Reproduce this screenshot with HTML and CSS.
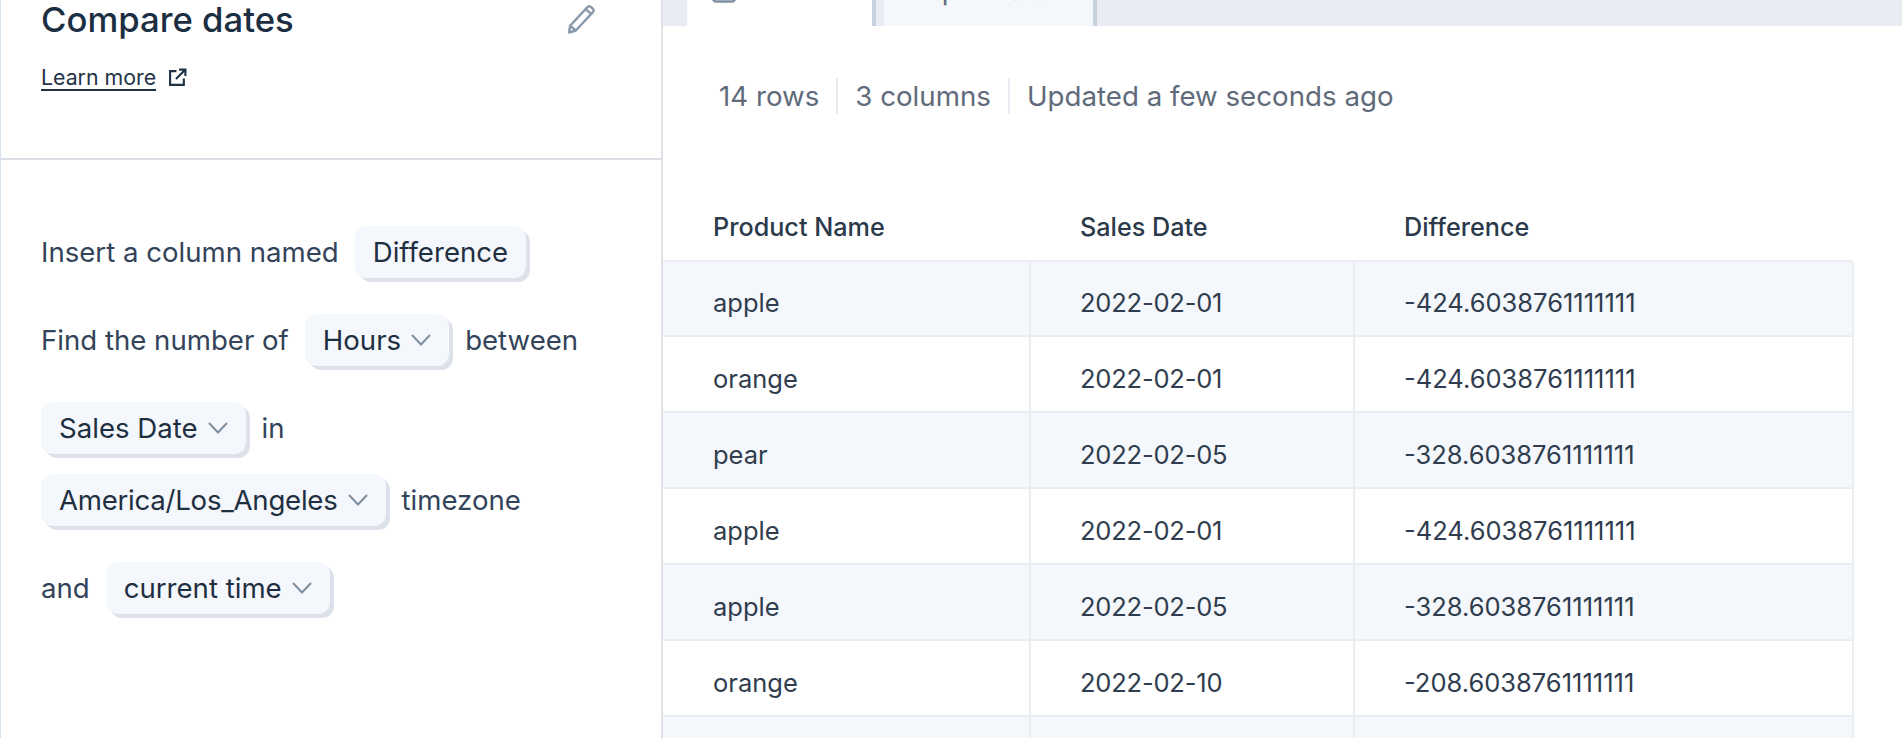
FILE: index.html
```html
<!DOCTYPE html>
<html lang="en">
<head>
<meta charset="utf-8">
<title>Compare dates</title>
<link rel="stylesheet" href="styles.css">
</head>
<body>
<div class="app">
  <aside class="panel">
    <header class="panel-head">
      <div class="title-row">
        <h1 class="title">Compare dates</h1>
        <svg class="pencil" width="29" height="30" viewBox="0 0 28 29" fill="none" stroke="#8a9bab" stroke-width="2.4" stroke-linejoin="round"><path d="M2 27.5l1-6.5L19.5 3.2a2.6 2.6 0 0 1 3.6-.3l1.6 1.3a2.6 2.6 0 0 1 .3 3.6L8.5 25.6z"/><path d="M3 21l5.5 4.6M18 5l6 5"/></svg>
      </div>
      <a class="learn" href="#">
        <span class="learn-text">Learn more</span>
        <svg width="19" height="19" viewBox="0 0 18 18" fill="none" stroke="#1f3346" stroke-width="2"><path d="M8 3H2v13h13v-6"/><path d="M7.5 10.5L16.5 1.500M10.500 1.500h6v6"/></svg>
      </a>
    </header>
    <section class="form">
      <div class="line"><span>Insert a column named</span><span class="chip">Difference</span></div>
      <div class="line"><span>Find the number of</span><span class="chip">Hours<svg class="chev" width="20" height="12" viewBox="0 0 20 12" fill="none" stroke="#7e90a0" stroke-width="2"><path d="M1 1l9 9.500L19 1"/></svg></span><span>between</span></div>
      <div class="line"><span class="chip">Sales Date<svg class="chev" width="20" height="12" viewBox="0 0 20 12" fill="none" stroke="#7e90a0" stroke-width="2"><path d="M1 1l9 9.500L19 1"/></svg></span><span>in</span><span class="chip chip-tight">America/Los_Angeles<svg class="chev" width="20" height="12" viewBox="0 0 20 12" fill="none" stroke="#7e90a0" stroke-width="2"><path d="M1 1l9 9.500L19 1"/></svg></span><span>timezone</span></div>
      <div class="line"><span>and</span><span class="chip">current time<svg class="chev" width="20" height="12" viewBox="0 0 20 12" fill="none" stroke="#7e90a0" stroke-width="2"><path d="M1 1l9 9.500L19 1"/></svg></span></div>
    </section>
  </aside>
  <main class="main">
    <nav class="tabs">
      <div class="tab tab-active"><svg class="tab-icon" width="26" height="26" viewBox="0 0 26 26" fill="none" stroke="#7e90a0" stroke-width="2.400"><rect x="1.500" y="1.500" width="23" height="23" rx="4"/></svg><span>Results</span></div>
      <div class="tab tab-other"><span>Input data</span></div>
    </nav>
    <div class="meta">
      <span class="meta-item">14 rows</span>
      <span class="meta-item">3 columns</span>
      <span class="meta-item">Updated a few seconds ago</span>
    </div>
    <table class="grid">
      <colgroup><col class="c1"><col class="c2"><col class="c3"></colgroup>
      <thead><tr><th>Product Name</th><th>Sales Date</th><th>Difference</th></tr></thead>
      <tbody>
        <tr><td>apple</td><td class="date">2022-02-01</td><td>-424.6038761111111</td></tr>
        <tr><td>orange</td><td class="date">2022-02-01</td><td>-424.6038761111111</td></tr>
        <tr><td>pear</td><td class="date">2022-02-05</td><td>-328.6038761111111</td></tr>
        <tr><td>apple</td><td class="date">2022-02-01</td><td>-424.6038761111111</td></tr>
        <tr><td>apple</td><td class="date">2022-02-05</td><td>-328.6038761111111</td></tr>
        <tr><td>orange</td><td class="date">2022-02-10</td><td>-208.6038761111111</td></tr>
        <tr><td></td><td></td><td></td></tr>
      </tbody>
    </table>
  </main>
</div>
</body>
</html>
```
FILE: styles.css
```css
* { box-sizing: border-box; }
html, body { margin: 0; height: 100%; overflow: hidden; background: #fff; }
body { font-family: Inter, "Noto Sans", sans-serif; color: #2b3a4b; }
.app { display: flex; height: 738px; overflow: hidden; }

.panel { width: 663px; flex: none; border-left: 1px solid #d7e2ef; border-right: 2px solid #dfe3e8; }
.panel-head { height: 160px; border-bottom: 2px solid #dadfe5; padding: 0 40px; }
.title-row { display: flex; justify-content: space-between; align-items: flex-start; height: 38px; padding-right: 25px; }
.title { margin: 0; font-size: 34.700px; line-height: 38px; font-weight: 500; color: #1c2e42; }
.pencil { margin-top: 4px; flex: none; }
.learn { display: inline-flex; align-items: center; gap: 12px; margin-top: 25px; color: #1f3346; text-decoration: none; font-size: 21.300px; line-height: 28px; }
.learn-text { text-decoration: underline; text-underline-offset: 4px; text-decoration-thickness: 2px; }

.form { padding: 66px 40px 0; }
.line { display: flex; flex-wrap: wrap; align-items: center; gap: 20px 16px; margin-bottom: 36px; font-size: 27.600px; font-weight: 400; line-height: 50px; color: #33445a; }
.line > span { padding-bottom: 1px; }
.chip { display: inline-flex; align-items: center; gap: 10px; height: 52px; padding: 0 18px; border-radius: 12px; background: #f4f7fb; box-shadow: 4px 4px 0 #dde2ea; color: #1f2f42; }
.chip-tight { letter-spacing: -0.25px; }

.main { flex: 1; min-width: 0; overflow: hidden; }
.tabs { display: flex; height: 26px; overflow: hidden; padding-left: 24px; background: #e9edf3; }
.tab { display: flex; align-items: flex-end; justify-content: flex-start; height: 26px; font-size: 27.700px; line-height: 30px; color: #5f6b7a; }
.tab span { position: relative; top: -21px; }
.tab-active { width: 189px; padding-left: 24px; gap: 24px; background: #fff; border-right: 4px solid #c8d1df; }
.tab-icon { flex: none; margin-bottom: 23px; }
.tab-other { width: 213px; margin-left: 8px; padding-left: 34px; background: #f4f7fb; border-right: 4px solid #c8d1df; }

.meta { display: flex; align-items: center; height: 40px; margin: 50px 0 0 56px; font-size: 27.700px; font-weight: 400; color: #5f6b7a; }
.meta-item { line-height: 36px; padding: 0 17px 0 0; margin-right: 17px; border-right: 2px solid #e9edf3; }
.meta-item:last-child { border-right: 0; }

.grid { table-layout: fixed; width: 1191px; margin-top: 88px; border-collapse: separate; border-spacing: 0; font-size: 25.500px; }
.c1 { width: 368px; }
.c2 { width: 324px; }
.c3 { width: 499px; }
.grid th { height: 56px; padding: 0 0 10px 50px; text-align: left; font-size: 25.200px; font-weight: 500; color: #2b3a4b; }
.grid th + th { padding-left: 49px; }
.grid td { height: 76px; padding: 8px 0 0 50px; border-right: 2px solid #eaeef2; border-bottom: 2px solid #eaeef2; color: #2f3d4e; }
.grid td + td { padding-left: 49px; }
.grid td.date { letter-spacing: -0.2px; }
.grid tbody tr:first-child td { height: 77px; padding-top: 7px; border-top: 2px solid #eaeef2; }
.grid tbody tr:first-child td:last-child { border-top-right-radius: 4px; }
.grid tbody tr:nth-child(odd) td { background: #f4f7fb; }
```
